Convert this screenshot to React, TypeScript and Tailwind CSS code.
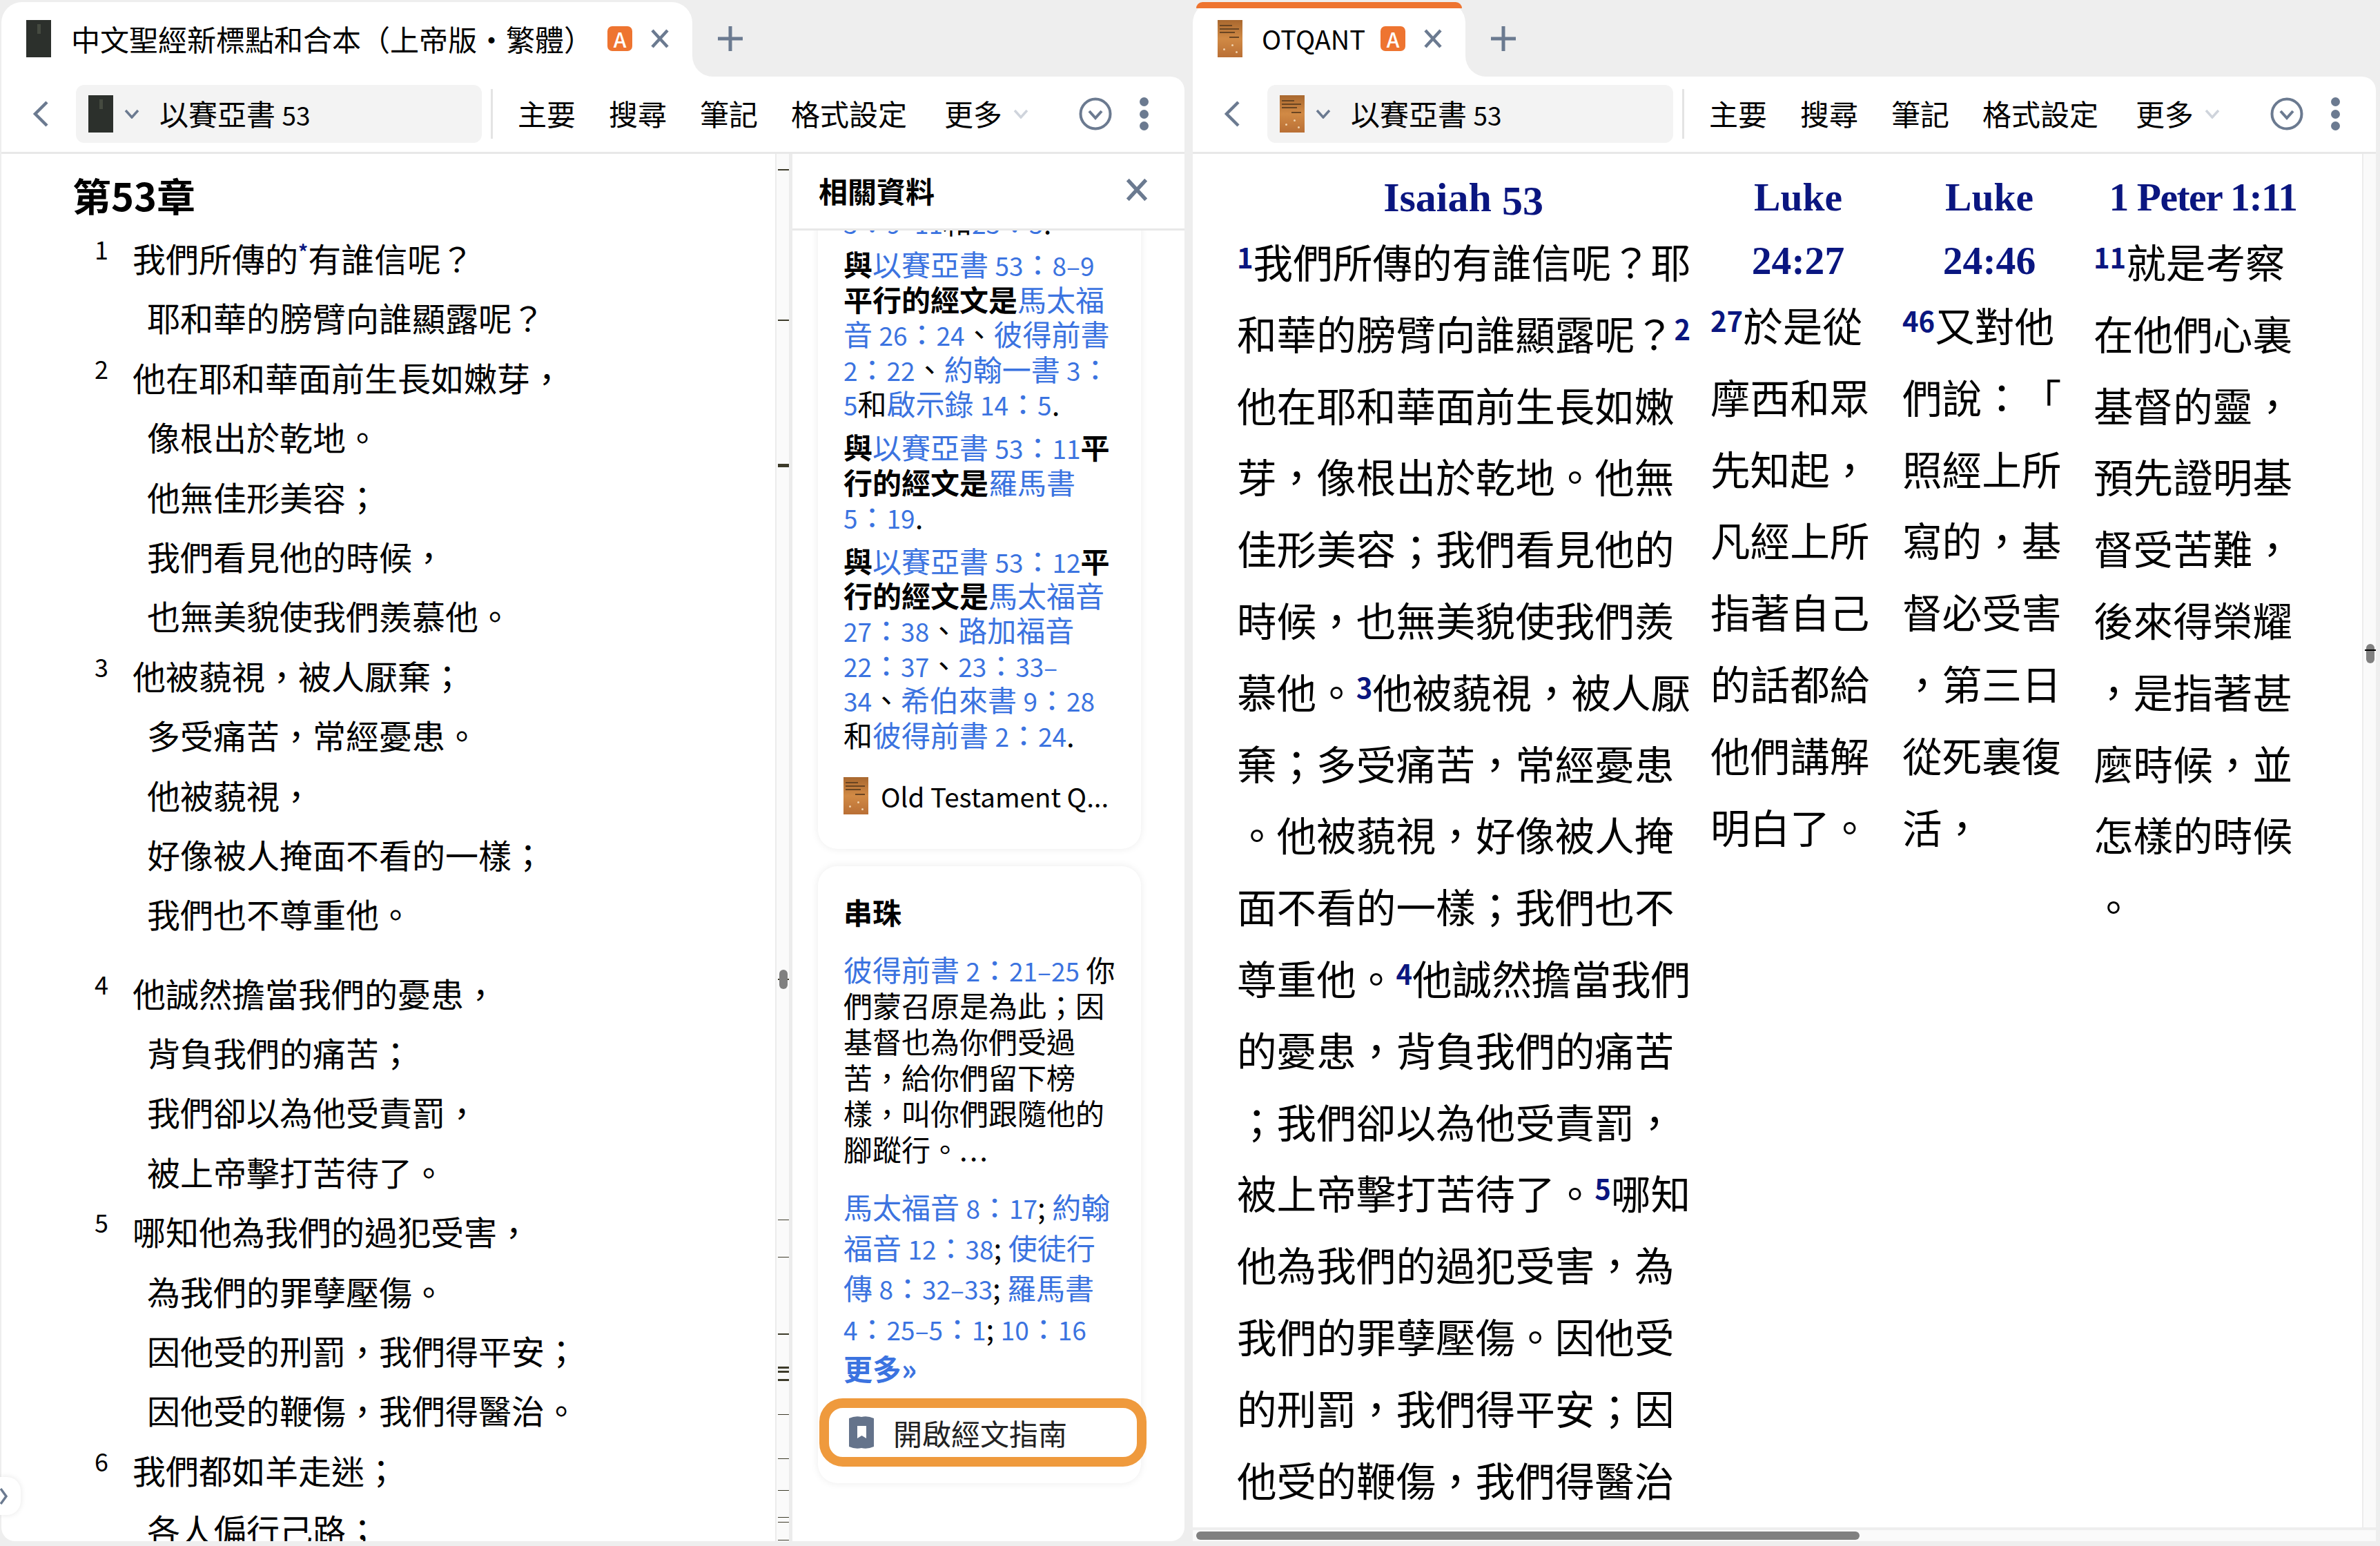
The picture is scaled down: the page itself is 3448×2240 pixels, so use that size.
import type { ReactNode } from "react";

const slate = "#6b7a90";

const LeftChevron = () => (
  <svg width="24" height="40" viewBox="0 0 24 40" fill="none" stroke={slate} strokeWidth="4.5" className="shrink-0">
    <path d="M21 3 L4 20 L21 37" />
  </svg>
);

const SmallChevron = ({ light }: { light?: boolean }) => (
  <svg width="22" height="14" viewBox="0 0 22 14" fill="none" stroke={light ? "#cfd4dc" : slate} strokeWidth="3.5" className="shrink-0">
    <path d="M2 2 L11 12 L20 2" />
  </svg>
);

const CloseIcon = () => (
  <svg width="28" height="28" viewBox="0 0 28 28" fill="none" stroke={slate} strokeWidth="4.5" className="shrink-0">
    <path d="M3 2 L25 26 M25 2 L3 26" />
  </svg>
);

const PlusIcon = () => (
  <svg width="36" height="36" viewBox="0 0 36 36" fill="none" stroke={slate} strokeWidth="5" className="shrink-0">
    <path d="M18 0 V36 M0 18 H36" />
  </svg>
);

const CircleChevron = () => (
  <svg width="48" height="48" viewBox="0 0 48 48" fill="none" stroke={slate} strokeWidth="4" className="shrink-0">
    <circle cx="24" cy="24" r="21.5" />
    <path d="M15 20 L24 30 L33 20" />
  </svg>
);

const Kebab = () => (
  <div className="flex h-[48px] w-[14px] shrink-0 flex-col justify-between">
    <div className="h-[13px] w-[13px] rounded-full bg-[#6b7a90]" />
    <div className="h-[13px] w-[13px] rounded-full bg-[#6b7a90]" />
    <div className="h-[13px] w-[13px] rounded-full bg-[#6b7a90]" />
  </div>
);

const DarkCover = () => (
  <div className="flex h-[54px] w-[36px] shrink-0 justify-center bg-[#2c302c] pt-[6px]">
    <div className="h-[14px] w-[5px] bg-[#454a40]" />
  </div>
);

const OrangeCover = () => (
  <div className="relative h-[54px] w-[36px] shrink-0 overflow-hidden bg-gradient-to-b from-[#a9682f] via-[#d18a45] to-[#b96f35] px-[3px] pt-[7px]">
    <div className="h-[2px] w-[18px] bg-[#6a4522]" />
    <div className="mt-[3px] h-[2px] w-[28px] bg-[#6a4522]" />
    <div className="mt-[3px] h-[2px] w-[22px] bg-[#6a4522]" />
    <div className="ml-[14px] mt-[5px] h-[2px] w-[14px] bg-[#6a4522]" />
    <div className="absolute bottom-[10px] left-[8px] h-[3px] w-[3px] rounded-full bg-[#f1d3ae]" />
    <div className="absolute bottom-[16px] left-[20px] h-[3px] w-[3px] rounded-full bg-[#f1d3ae]" />
    <div className="absolute bottom-[6px] left-[26px] h-[3px] w-[3px] rounded-full bg-[#f1d3ae]" />
  </div>
);

const Badge = () => (
  <div className="flex h-[36px] w-[36px] shrink-0 items-center justify-center rounded-[7px] bg-[#ee7430] text-[30px] font-medium leading-none text-white">
    A
  </div>
);

const Toolbar = ({ cover }: { cover: ReactNode }) => (
  <div className="flex h-[112px] shrink-0 items-center rounded-tr-[20px] border-b-[3px] border-[#e8e8e8] bg-white pb-[1px] pl-[45px] text-[42px] text-black">
    <LeftChevron />
    <div className="ml-[39px] flex h-[84px] w-[588px] shrink-0 items-center rounded-[12px] bg-[#f3f3f3] pl-[18px]">
      {cover}
      <div className="ml-[16px]">
        <SmallChevron />
      </div>
      <span className="-mt-[4px] ml-[29px]">以賽亞書 <span className="text-[37px] leading-none">53</span></span>
    </div>
    <div className="ml-[13px] h-[72px] w-[3px] shrink-0 bg-[#e4e4e4]" />
    <span className="-mt-[4px] ml-[36px]">主要</span>
    <span className="-mt-[4px] ml-[48px]">搜尋</span>
    <span className="-mt-[4px] ml-[48px]">筆記</span>
    <span className="-mt-[4px] ml-[48px]">格式設定</span>
    <span className="-mt-[4px] ml-[54px]">更多</span>
    <div className="ml-[16px]">
      <SmallChevron light />
    </div>
    <div className="ml-[73px]">
      <CircleChevron />
    </div>
    <div className="ml-[40px]">
      <Kebab />
    </div>
  </div>
);

const Ticks = ({ marks }: { marks: [number, number][] }) => (
  <>
    {marks.map(([top, h]) => (
      <div key={top} className="absolute left-[2px] w-[16px] bg-[#3d3b2a]" style={{ top, height: h }} />
    ))}
  </>
);

type Line = { n?: string; t: ReactNode; gap?: boolean };

const verses: Line[] = [
  { n: "1", t: <>我們所傳的<span className="align-[18px] text-[28px] font-bold leading-none text-[#0a1680]">*</span>有誰信呢？</> },
  { t: "耶和華的膀臂向誰顯露呢？" },
  { n: "2", t: "他在耶和華面前生長如嫩芽，" },
  { t: "像根出於乾地。" },
  { t: "他無佳形美容；" },
  { t: "我們看見他的時候，" },
  { t: "也無美貌使我們羨慕他。" },
  { n: "3", t: "他被藐視，被人厭棄；" },
  { t: "多受痛苦，常經憂患。" },
  { t: "他被藐視，" },
  { t: "好像被人掩面不看的一樣；" },
  { t: "我們也不尊重他。" },
  { n: "4", t: "他誠然擔當我們的憂患，", gap: true },
  { t: "背負我們的痛苦；" },
  { t: "我們卻以為他受責罰，" },
  { t: "被上帝擊打苦待了。" },
  { n: "5", t: "哪知他為我們的過犯受害，" },
  { t: "為我們的罪孽壓傷。" },
  { t: "因他受的刑罰，我們得平安；" },
  { t: "因他受的鞭傷，我們得醫治。" },
  { n: "6", t: "我們都如羊走迷；" },
  { t: "各人偏行己路；" },
];

// digits in the side panel run narrower than the CJK around them
const Digits = ({ text }: { text: string }) => (
  <>
    {text.split(/([\d–]+)/).map((part, i) =>
      i % 2 === 1 ? <span key={i} className="text-[37px] leading-none">{part}</span> : part
    )}
  </>
);

const A = ({ children }: { children: string }) => (
  <span className="text-[#3b73e0]"><Digits text={children} /></span>
);
const B = ({ children }: { children: ReactNode }) => <span className="font-bold">{children}</span>;

const Num = ({ children }: { children: ReactNode }) => (
  <span className="align-[14px] text-[40px] font-bold leading-none text-[#0a1680]">{children}</span>
);

const col1: ReactNode[] = [
  <><Num>1</Num>我們所傳的有誰信呢？耶</>,
  <>和華的膀臂向誰顯露呢？<Num>2</Num></>,
  "他在耶和華面前生長如嫩",
  "芽，像根出於乾地。他無",
  "佳形美容；我們看見他的",
  "時候，也無美貌使我們羨",
  <>慕他。<Num>3</Num>他被藐視，被人厭</>,
  "棄；多受痛苦，常經憂患",
  "。他被藐視，好像被人掩",
  "面不看的一樣；我們也不",
  <>尊重他。<Num>4</Num>他誠然擔當我們</>,
  "的憂患，背負我們的痛苦",
  "；我們卻以為他受責罰，",
  <>被上帝擊打苦待了。<Num>5</Num>哪知</>,
  "他為我們的過犯受害，為",
  "我們的罪孽壓傷。因他受",
  "的刑罰，我們得平安；因",
  "他受的鞭傷，我們得醫治",
];
const col2: ReactNode[] = [
  <><Num>27</Num>於是從</>,
  "摩西和眾",
  "先知起，",
  "凡經上所",
  "指著自己",
  "的話都給",
  "他們講解",
  "明白了。",
];
const col3: ReactNode[] = [
  <><Num>46</Num>又對他</>,
  "們說：「",
  "照經上所",
  "寫的，基",
  "督必受害",
  "，第三日",
  "從死裏復",
  "活，",
];
const col4: ReactNode[] = [
  <><Num>11</Num>就是考察</>,
  "在他們心裏",
  "基督的靈，",
  "預先證明基",
  "督受苦難，",
  "後來得榮耀",
  "，是指著甚",
  "麼時候，並",
  "怎樣的時候",
  "。",
];

const Body = ({ lines }: { lines: ReactNode[] }) => (
  <div className="-mt-[5px] whitespace-nowrap text-[57.6px] leading-[103.8px] text-black">
    {lines.map((l, i) => (
      <div key={i} className="h-[103.8px]">{l}</div>
    ))}
  </div>
);

const Title = ({ children }: { children: ReactNode }) => (
  <div className="h-[92px] whitespace-nowrap text-center font-['Liberation_Serif',serif] text-[57.6px] font-bold leading-[92px] text-[#0a1680]">
    {children}
  </div>
);

export default function App() {
  return (
    <div className="relative flex h-[2240px] w-[3448px] gap-[12px] overflow-hidden bg-[#eeeeee] pb-[7px] pl-[2px] pt-[3px] font-['Noto_Sans_CJK_TC',sans-serif] [text-spacing-trim:space-all]">
      {/* left pane */}
      <div className="flex w-[1714px] shrink-0 flex-col">
        <div className="flex h-[108px] shrink-0">
          <div className="flex w-[1001px] shrink-0 items-center rounded-t-[30px] bg-white pb-[3px] pl-[36px]">
            <DarkCover />
            <span className="ml-[29px] whitespace-nowrap text-[42px] text-black">中文聖經新標點和合本（上帝版‧繁體）</span>
            <div className="ml-auto"><Badge /></div>
            <div className="ml-[26px] mr-[33px]"><CloseIcon /></div>
          </div>
          <div className="relative flex flex-1 items-center pb-[3px] pl-[37px]">
            <div className="absolute bottom-0 left-0 h-[32px] w-[32px] bg-white" />
            <div className="absolute bottom-0 left-0 h-[32px] w-[32px] rounded-bl-[30px] bg-[#eeeeee]" />
            <PlusIcon />
          </div>
        </div>
        <Toolbar cover={<DarkCover />} />
        <div className="flex min-h-0 flex-1 overflow-hidden rounded-b-[20px] bg-white">
          {/* reading column */}
          <div className="w-[1121px] shrink-0 overflow-hidden pt-[29px] text-black">
            <h1 className="ml-[103px] text-[56px] font-bold leading-[60px]">第53章</h1>
            <div className="ml-[135px] mt-[18px]">
              {verses.map((v, i) => (
                <div key={i} className={v.gap ? "mt-[28px] flex h-[86.4px]" : "flex h-[86.4px]"}>
                  {v.n ? (
                    <>
                      <span className="w-[55px] shrink-0 text-[36px] leading-[60px]">{v.n}</span>
                      <span className="whitespace-nowrap text-[48px] leading-[86.4px]">{v.t}</span>
                    </>
                  ) : (
                    <span className="ml-[76px] whitespace-nowrap text-[48px] leading-[86.4px]">{v.t}</span>
                  )}
                </div>
              ))}
            </div>
          </div>
          {/* ruler strip */}
          <div className="relative w-[25px] shrink-0 border-l-[2px] border-r-[5px] border-[#ececec] bg-[#fafafa]">
            <Ticks marks={[[22, 2], [240, 2], [449, 5], [1195, 2], [1544, 1], [1598, 1], [1709, 2], [1757, 3], [1763, 3], [1775, 3], [1826, 1], [1890, 1], [1936, 1], [1975, 1], [1982, 1], [2008, 1]]} />
            <div className="absolute left-[4px] top-[1182px] h-[28px] w-[12px] rounded-[6px] bg-[#808080]" />
          </div>
          {/* related panel */}
          <div className="flex min-w-0 flex-1 flex-col">
            <div className="flex h-[111px] shrink-0 items-center justify-between border-b-[3px] border-[#e8e8e8] pb-[4px] pl-[38px] pr-[55px]">
              <span className="text-[42px] font-bold text-black">相關資料</span>
              <div className="scale-[1.2]"><CloseIcon /></div>
            </div>
            <div className="min-h-0 flex-1 overflow-hidden pl-[37px] pr-[63px] text-[42px] text-black">
              <div className="-mt-[38px] whitespace-nowrap rounded-[28px] bg-white px-[37px] pb-[50px] pt-0 leading-[50.4px] shadow-[0_0_12px_rgba(0,0,0,0.08)]">
                <div className="mb-[11px]"><A>3：9–11</A>和<A>23：5</A>.</div>
                <div className="mb-[13px]">
                  <div><B>與</B><A>以賽亞書 53：8–9</A></div>
                  <div><B>平行的經文是</B><A>馬太福</A></div>
                  <div><A>音 26：24</A>、<A>彼得前書</A></div>
                  <div><A>2：22</A>、<A>約翰一書 3：</A></div>
                  <div><A>5</A>和<A>啟示錄 14：5</A>.</div>
                </div>
                <div className="mb-[13px]">
                  <div><B>與</B><A>以賽亞書 53：11</A><B>平</B></div>
                  <div><B>行的經文是</B><A>羅馬書</A></div>
                  <div><A>5：19</A>.</div>
                </div>
                <div>
                  <div><B>與</B><A>以賽亞書 53：12</A><B>平</B></div>
                  <div><B>行的經文是</B><A>馬太福音</A></div>
                  <div><A>27：38</A>、<A>路加福音</A></div>
                  <div><A>22：37</A>、<A>23：33–</A></div>
                  <div><A>34</A>、<A>希伯來書 9：28</A></div>
                  <div>和<A>彼得前書 2：24</A>.</div>
                </div>
                <div className="mt-[37px] flex items-center">
                  <OrangeCover />
                  <span className="ml-[18px] text-[38.5px]">Old Testament Q...</span>
                </div>
              </div>
              <div className="mt-[25px] rounded-[28px] bg-white pb-[24px] pt-[41px] shadow-[0_0_12px_rgba(0,0,0,0.08)]">
                <div className="whitespace-nowrap px-[37px]">
                  <div className="font-bold leading-[50px]">串珠</div>
                  <div className="mt-[32px] leading-[52px]">
                    <div><A>彼得前書 2：21–25</A> 你</div>
                    <div>們蒙召原是為此；因</div>
                    <div>基督也為你們受過</div>
                    <div>苦，給你們留下榜</div>
                    <div>樣，叫你們跟隨他的</div>
                    <div>腳蹤行。<span className="tracking-[3px]">...</span></div>
                  </div>
                  <div className="mt-[29px] leading-[58.5px]">
                    <div><A>馬太福音 8：17</A>; <A>約翰</A></div>
                    <div><A>福音 12：38</A>; <A>使徒行</A></div>
                    <div><A>傳 8：32–33</A>; <A>羅馬書</A></div>
                    <div><A>4：25–5：1</A>; <A>10：16</A></div>
                    <div className="font-bold"><A>更多»</A></div>
                  </div>
                </div>
                <div className="ml-[2px] mt-[14px] flex h-[99px] w-[474px] items-center rounded-[34px] border-[14px] border-[#ef9a3d] bg-white pl-[29px]">
                  <svg width="36" height="49" viewBox="0 0 36 49" className="shrink-0">
                    <path d="M0 4 Q9 0 18 2 Q27 0 36 4 V45 Q27 49 18 47 Q9 49 0 45 Z" fill="#64738b" />
                    <path d="M12 15 H25 V33 L18.5 29 L12 33 Z" fill="#ffffff" />
                  </svg>
                  <span className="ml-[28px] text-[#222]">開啟經文指南</span>
                </div>
              </div>
            </div>
          </div>
        </div>
      </div>

      {/* right pane */}
      <div className="flex w-[1714px] shrink-0 flex-col">
        <div className="flex h-[108px] shrink-0">
          <div className="relative flex w-[395px] shrink-0 items-center rounded-t-[30px] bg-white pb-[3px] pl-[36px]">
            <div className="absolute inset-x-[5px] top-0 h-[9px] rounded-t-[16px] bg-[#ee7430]" />
            <OrangeCover />
            <span className="ml-[28px] text-[38px] text-black">OTQANT</span>
            <div className="ml-auto"><Badge /></div>
            <div className="ml-[26px] mr-[33px]"><CloseIcon /></div>
          </div>
          <div className="relative flex flex-1 items-center pb-[3px] pl-[37px]">
            <div className="absolute bottom-0 left-0 h-[32px] w-[32px] bg-white" />
            <div className="absolute bottom-0 left-0 h-[32px] w-[32px] rounded-bl-[30px] bg-[#eeeeee]" />
            <PlusIcon />
          </div>
        </div>
        <Toolbar cover={<OrangeCover />} />
        <div className="flex min-h-0 flex-1 flex-col overflow-hidden bg-white">
          <div className="flex min-h-0 flex-1">
            <div className="flex min-w-0 flex-1 overflow-hidden pl-[64px] pt-[17px]">
              <div className="w-[656px] shrink-0">
                <Title><span className="text-[60px]">Isaiah <span className="align-[-5px] leading-none">53</span></span></Title>
                <Body lines={col1} />
              </div>
              <div className="ml-[30px] w-[278px] shrink-0">
                <div className="w-[254px]">
                  <Title>Luke</Title>
                  <Title>24:27</Title>
                </div>
                <Body lines={col2} />
              </div>
              <div className="w-[277px] shrink-0">
                <div className="w-[252px]">
                  <Title>Luke</Title>
                  <Title>24:46</Title>
                </div>
                <Body lines={col3} />
              </div>
              <div className="w-[317px] shrink-0">
                <Title><span className="tracking-[-1.5px]">1 Peter 1:11</span></Title>
                <Body lines={col4} />
              </div>
            </div>
            <div className="relative w-[20px] shrink-0 border-l-[2px] border-[#ececec] bg-[#fafafa]">
              <div className="absolute left-[4px] top-[710px] h-[28px] w-[12px] rounded-[6px] bg-[#808080]" />
              <div className="absolute left-[2px] top-[718px] h-[2px] w-[16px] bg-black" />
            </div>
          </div>
          <div className="h-[20px] shrink-0 border-t-[4px] border-[#eeeeee] bg-[#fafafa] pl-[5px] pt-[2px]">
            <div className="h-[12px] w-[961px] rounded-[6px] bg-[#808080]" />
          </div>
        </div>
      </div>

      {/* collapsed side handle */}
      <div className="absolute left-0 top-[2140px] flex h-[55px] w-[30px] items-center rounded-r-[20px] bg-white shadow-[0_0_8px_rgba(0,0,0,0.1)]">
        <svg width="12" height="26" viewBox="0 0 12 26" fill="none" stroke={slate} strokeWidth="3.5" className="shrink-0">
          <path d="M1 2 L9 13 L1 24" />
        </svg>
      </div>
    </div>
  );
}
